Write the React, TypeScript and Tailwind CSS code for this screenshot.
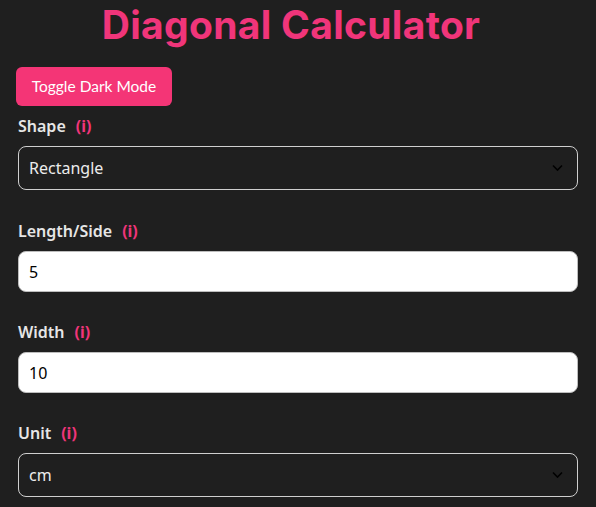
import React, { useState } from "react"

const bodyFont = { fontFamily: '"Noto Sans", "Open Sans", sans-serif' }

function InfoLabel({ text }: { text: string }) {
  return (
    <div className="flex items-center h-6 mb-2 text-[16px] font-semibold text-[#e6e6e6]">
      <span>{text}</span>
      <span className="ml-[10px] text-[#f0357a] font-bold">(i)</span>
    </div>
  )
}

function Chevron() {
  return (
    <svg
      className="absolute right-[15px] top-1/2 -translate-y-1/2 pointer-events-none"
      width="11"
      height="7"
      viewBox="0 0 11 7"
      fill="none"
    >
      <path d="M1 1l4.5 4.5L10 1" stroke="#000" strokeWidth="1.6" />
    </svg>
  )
}

function SelectField({ label, value, options }: { label: string; value: string; options: string[] }) {
  const [v, setV] = useState(value)
  return (
    <div className="mb-[29px]">
      <InfoLabel text={label} />
      <div className="relative">
        <select
          value={v}
          onChange={(e) => setV(e.target.value)}
          className="appearance-none w-full h-[44px] rounded-lg border border-[#cfcfcf] bg-[#1f1f1f] px-[10px] text-[16px] text-[#ececec] outline-none"
          style={bodyFont}
        >
          {options.map((o) => (
            <option key={o}>{o}</option>
          ))}
        </select>
        <Chevron />
      </div>
    </div>
  )
}

function InputField({ label, value }: { label: string; value: string }) {
  const [v, setV] = useState(value)
  return (
    <div className="mb-[28px]">
      <InfoLabel text={label} />
      <input
        value={v}
        onChange={(e) => setV(e.target.value)}
        className="w-full h-[41px] rounded-lg border border-[#bdbdbd] bg-white px-[10px] text-[16px] text-black outline-none"
        style={bodyFont}
      />
    </div>
  )
}

export default function App() {
  return (
    <div className="min-h-[507px] bg-[#1f1f1f] px-[18px]" style={bodyFont}>
      <h1
        className="text-center pr-[14px] text-[39px] font-bold leading-[50px] text-[#f0357a] tracking-[0.3px]"
        style={{ fontFamily: 'Inter, "Noto Sans", sans-serif' }}
      >
        Diagonal Calculator
      </h1>

      <button
        className="mt-[17px] ml-[-2px] h-[39px] w-[156px] rounded-md bg-[#f43576] text-[15.5px] text-white"
        style={{ fontFamily: 'Lato, "Noto Sans", sans-serif' }}
      >
        Toggle Dark Mode
      </button>

      <div className="mt-2">
        <SelectField label="Shape" value="Rectangle" options={["Rectangle", "Square", "Cube", "Cuboid"]} />
        <InputField label="Length/Side" value="5" />
        <InputField label="Width" value="10" />
        <SelectField label="Unit" value="cm" options={["cm", "m", "in", "ft"]} />
      </div>
    </div>
  )
}
